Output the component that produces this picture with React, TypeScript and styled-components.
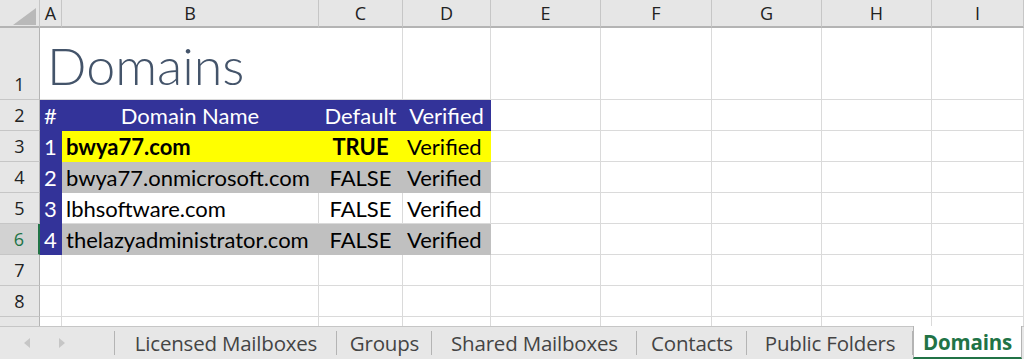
import styled, { createGlobalStyle } from 'styled-components';

const GlobalStyle = createGlobalStyle`
  html, body {
    margin: 0;
    padding: 0;
    background: #ffffff;
    overflow: hidden;
  }
`;

const BLUE = '#333399';
const YELLOW = '#ffff00';
const GRAY = '#c0c0c0';
const GRID = '#dadada';
const CELL_FONT = "Lato, 'Liberation Sans', sans-serif";
const UI_FONT = "'Open Sans', 'Noto Sans', sans-serif";

type Row = {
  n: number;
  fill?: string;
  idx: string;
  name: string;
  def: string;
  ver: string;
  bold?: boolean;
};

const rows: Row[] = [
  { n: 3, fill: YELLOW, idx: '1', name: 'bwya77.com', def: 'TRUE', ver: 'Verified', bold: true },
  { n: 4, fill: GRAY, idx: '2', name: 'bwya77.onmicrosoft.com', def: 'FALSE', ver: 'Verified' },
  { n: 5, idx: '3', name: 'lbhsoftware.com', def: 'FALSE', ver: 'Verified' },
  { n: 6, fill: GRAY, idx: '4', name: 'thelazyadministrator.com', def: 'FALSE', ver: 'Verified' },
];

const letters = ['A', 'B', 'C', 'D', 'E', 'F', 'G', 'H', 'I'];

const tabs = [
  { label: 'Licensed Mailboxes', width: 222 },
  { label: 'Groups', width: 95 },
  { label: 'Shared Mailboxes', width: 205 },
  { label: 'Contacts', width: 110 },
  { label: 'Public Folders', width: 166 },
  { label: 'Domains', width: 109, active: true },
];

function App() {
  return (
    <Window>
      <GlobalStyle />
      <Sheet>
        <Corner>
          <svg width="40" height="28" viewBox="0 0 40 28">
            <polygon points="13,25 36,8 36,25" fill="#b9b9b9" />
          </svg>
        </Corner>
        {letters.map((l) => (
          <ColHead key={l}>{l}</ColHead>
        ))}

        <RowHead>1</RowHead>
        <TitleCell>Domains</TitleCell>
        {letters.slice(3).map((l) => (
          <Cell key={l} />
        ))}

        <RowHead>2</RowHead>
        <Cell $fill={BLUE} $color="#ffffff" $align="left">#</Cell>
        <Cell $fill={BLUE} $color="#ffffff" $align="center">Domain Name</Cell>
        <Cell $fill={BLUE} $color="#ffffff" $align="center">Default</Cell>
        <Cell $fill={BLUE} $color="#ffffff" $align="center">Verified</Cell>
        {letters.slice(4).map((l) => (
          <Cell key={l} />
        ))}

        {rows.map((r) => (
          <Line key={r.n} r={r} />
        ))}

        {[7, 8, 9].map((n) => (
          <EmptyRow key={n} n={n} />
        ))}
      </Sheet>

      <TabBar>
        <NavArrows>
          <svg width="12" height="12" viewBox="0 0 12 12">
            <polygon points="8,1 2,6 8,11" fill="#c6c6c6" />
          </svg>
          <svg width="12" height="12" viewBox="0 0 12 12">
            <polygon points="4,1 10,6 4,11" fill="#c6c6c6" />
          </svg>
        </NavArrows>
        {tabs.map((t) => (
          <Tab key={t.label} $width={t.width} $active={t.active}>
            {t.label}
          </Tab>
        ))}
      </TabBar>
    </Window>
  );
}

function Line({ r }: { r: Row }) {
  return (
    <>
      <RowHead $selected={r.n === 6}>{r.n}</RowHead>
      <Cell $fill={BLUE} $color="#ffffff" $align="center">{r.idx}</Cell>
      <Cell $fill={r.fill} $bold={r.bold} $align="left">{r.name}</Cell>
      <Cell $fill={r.fill} $bold={r.bold} $align="center">{r.def}</Cell>
      <Cell $fill={r.fill} $align="left">{r.ver}</Cell>
      {letters.slice(4).map((l) => (
        <Cell key={l} />
      ))}
    </>
  );
}

function EmptyRow({ n }: { n: number }) {
  return (
    <>
      <RowHead>{n}</RowHead>
      {letters.map((l) => (
        <Cell key={l} />
      ))}
    </>
  );
}

export default App;

const Window = styled.div`
  width: 1024px;
  height: 359px;
  display: flex;
  flex-direction: column;
  overflow: hidden;
  background: #ffffff;
`;

const Sheet = styled.div`
  height: 326px;
  overflow: hidden;
  display: grid;
  grid-template-columns: 40px 22px 257px 84px 88px 110px 111px 110px 110px 1fr;
  grid-template-rows: 28px 72px repeat(8, 31px);
`;

const Corner = styled.div`
  background: #e6e6e6;
  border-right: 1px solid #c6c6c6;
  border-bottom: 2px solid #b4b4b4;
  box-sizing: border-box;
  svg {
    display: block;
  }
`;

const ColHead = styled.div`
  box-sizing: border-box;
  background: #e6e6e6;
  border-right: 1px solid #c6c6c6;
  border-bottom: 2px solid #b4b4b4;
  display: flex;
  align-items: center;
  justify-content: center;
  font-family: ${UI_FONT};
  font-size: 18px;
  color: #222222;
`;

const RowHead = styled.div<{ $selected?: boolean }>`
  box-sizing: border-box;
  background: ${(p) => (p.$selected ? '#d2d2d2' : '#e6e6e6')};
  border-bottom: 1px solid #c6c6c6;
  border-right: ${(p) => (p.$selected ? '2px solid #217346' : '1px solid #b4b4b4')};
  display: flex;
  align-items: flex-end;
  justify-content: center;
  padding-bottom: 3px;
  font-family: ${UI_FONT};
  font-size: 18px;
  color: ${(p) => (p.$selected ? '#217346' : '#222222')};
`;

const Cell = styled.div<{ $fill?: string; $color?: string; $align?: string; $bold?: boolean }>`
  box-sizing: border-box;
  background: ${(p) => p.$fill ?? '#ffffff'};
  border-right: 1px solid ${(p) => p.$fill ?? GRID};
  border-bottom: 1px solid ${(p) => p.$fill ?? GRID};
  padding: 0 4px;
  display: flex;
  align-items: flex-end;
  justify-content: ${(p) => (p.$align === 'center' ? 'center' : 'flex-start')};
  font-family: ${CELL_FONT};
  font-size: 22px;
  line-height: 28px;
  font-weight: ${(p) => (p.$bold ? 700 : 400)};
  color: ${(p) => p.$color ?? '#000000'};
  white-space: nowrap;
  overflow: hidden;
`;

const TitleCell = styled.div`
  grid-column: span 3;
  box-sizing: border-box;
  border-right: 1px solid ${GRID};
  border-bottom: 1px solid ${GRID};
  display: flex;
  align-items: flex-end;
  padding: 0 0 3px 7px;
  font-family: ${CELL_FONT};
  font-weight: 300;
  font-size: 52px;
  line-height: 62px;
  color: #44546a;
`;

const TabBar = styled.div`
  flex: 1;
  display: flex;
  align-items: stretch;
  background: #e7e7e7;
  border-top: 1px solid #c6c6c6;
  box-sizing: border-box;
`;

const NavArrows = styled.div`
  width: 115px;
  box-sizing: border-box;
  display: flex;
  align-items: center;
  gap: 21px;
  padding-left: 22px;
  border-right: 1px solid #b4b4b4;
  margin: 4px 0;
`;

const Tab = styled.div<{ $width: number; $active?: boolean }>`
  width: ${(p) => p.$width}px;
  box-sizing: border-box;
  display: flex;
  align-items: center;
  justify-content: center;
  font-family: ${UI_FONT};
  font-size: 20.5px;
  letter-spacing: -0.2px;
  font-weight: ${(p) => (p.$active ? 700 : 400)};
  color: ${(p) => (p.$active ? '#217346' : '#444444')};
  background: ${(p) => (p.$active ? '#ffffff' : 'transparent')};
  margin-top: ${(p) => (p.$active ? '-1px' : '0')};
  border-left: ${(p) => (p.$active ? '1px solid #b4b4b4' : 'none')};
  border-right: ${(p) => (p.$active ? '1px solid #b4b4b4' : 'none')};
  border-bottom: ${(p) => (p.$active ? '2px solid #217346' : 'none')};
  position: relative;
  &::after {
    content: '';
    position: absolute;
    right: 0;
    top: 4px;
    bottom: 4px;
    width: 1px;
    background: #b4b4b4;
    display: ${(p) => (p.$active ? 'none' : 'block')};
  }
`;
